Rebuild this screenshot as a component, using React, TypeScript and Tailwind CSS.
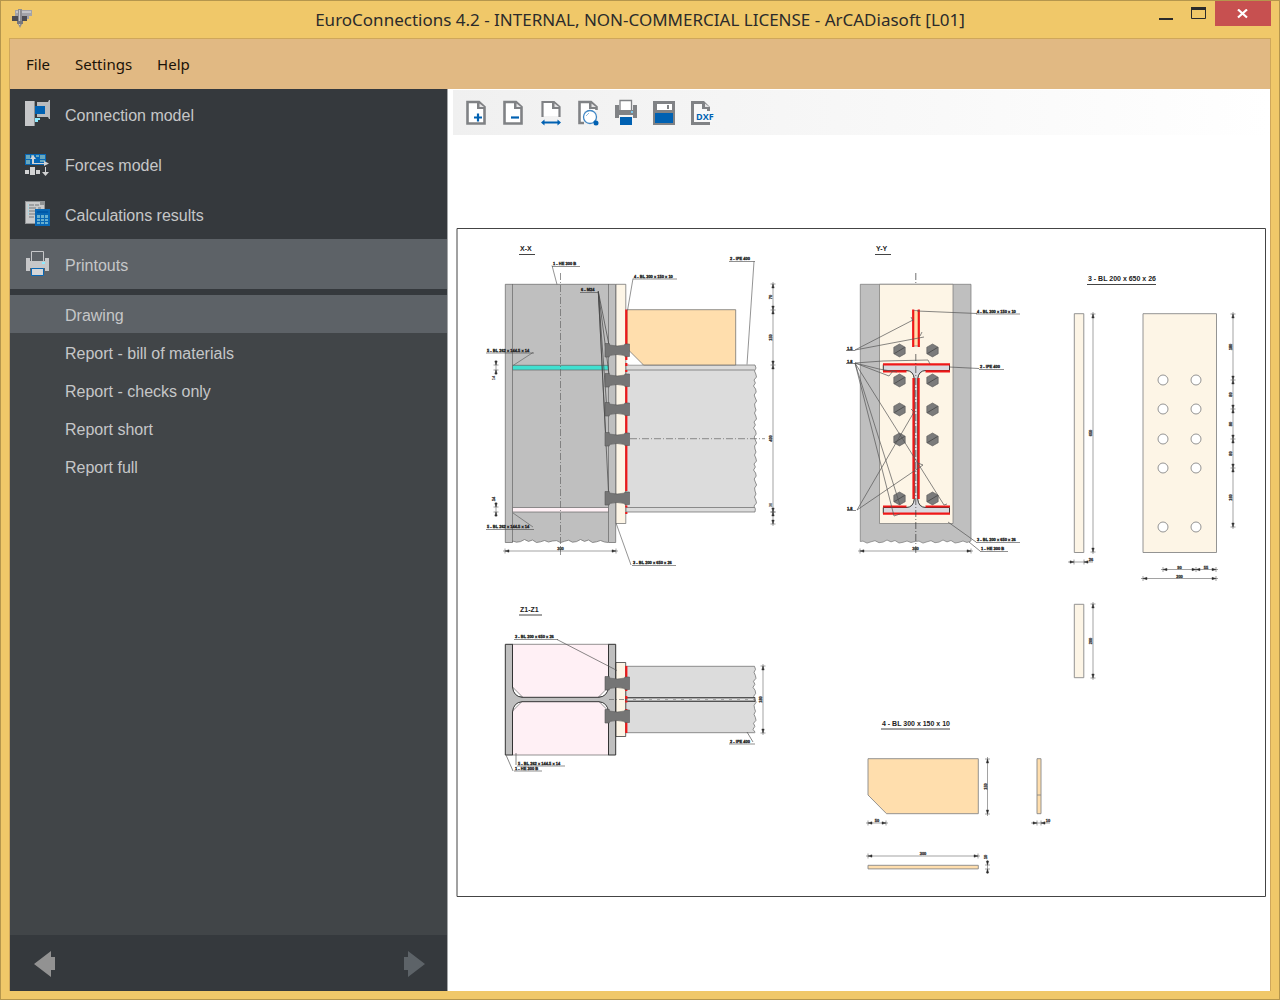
import React from 'react'

const bolts = [350, 380, 409, 439, 498]

const reports = [
  'Drawing',
  'Report - bill of materials',
  'Report - checks only',
  'Report short',
  'Report full',
]

const wobble = [0, 1, -0.5, 0.8, 1.5, -1, 0.4, -1.5, 0.6, 1.2, -0.8, 0.3, 1.6, -0.4]

// Ragged break line of a cut member, running down or to the left
const breakDown = (x: number, y1: number, y2: number) => {
  let d = ''
  for (let y = y1 + 3, i = 1; y < y2; y += 3, i++) d += `L${x + wobble[i % 14]} ${y}`
  return `${d}L${x} ${y2}`
}

const breakLeft = (y: number, x1: number, x2: number) => {
  let d = ''
  for (let x = x1 - 4, i = 1; x > x2; x -= 4, i++) d += `L${x} ${y + wobble[i % 14]}`
  return `${d}L${x2} ${y}`
}

const AppIcon = () => (
  <svg width="20" height="20" viewBox="0 0 20 20" aria-hidden="true">
    <path d="M3 1h17v6h-3v3h-6V7H3z" fill="#a3a3a8" />
    <path d="M4 2h15v2H4z" fill="#c3c3c6" />
    <path d="M0 7h15v5H0z" fill="#4c4c52" />
    <path d="M6 0h4v15l-2 4-2-4z" fill="#8d8d92" />
    <path d="M7 1h1v15H7z" fill="#c8c8ca" />
    <path d="M5 12h6v3H5z" fill="#77777c" />
  </svg>
)

const ConnectionIcon = () => (
  <svg width="26" height="28" viewBox="0 0 26 28" aria-hidden="true">
    <path d="M0 1h9v25H0z" fill="#c6c7c9" />
    <path d="M9 1h1v25H9z" fill="#8b8f92" />
    <path d="M12 2h11l1-2h1v19h-1l-1-2H12v-3h8V6h-8z" fill="#b9bbbe" />
    <path d="M10 6h10v8H10z" fill="#0061b2" />
    <path d="M10 18h5v2h-2v2h-3z" fill="#8eeaff" />
  </svg>
)

const ForcesIcon = () => (
  <svg width="26" height="28" viewBox="0 0 26 28" aria-hidden="true">
    <path d="M0 4h21v11H0z" fill="#0867b5" />
    <path d="M1 5h4v4H1zM6 5h3v2H6zM11 5h3v2h-3zM15 5h5v4h-5zM1 10h4v4H1zM15 10h5v2h-5z" fill="#68a7bd" />
    <path d="M8 5l3 4H9v4h10v-2l5 2.500-5 2.500v-2H7V9H5z" fill="#d2d3d4" />
    <path d="M0 20h4v4H0zM5 17h5v8H5zM11 20h4v4h-4zM20 17h1v5h3l-3.500 4-3.500-4h3z" fill="#d2d3d4" />
  </svg>
)

const ResultsIcon = () => (
  <svg width="26" height="28" viewBox="0 0 26 28" aria-hidden="true">
    <path d="M0 1h20v23H0z" fill="#8f9294" />
    <path d="M1 2h14v3h4v18H1z" fill="#c9cacb" />
    <path d="M4 5h5M10 5h4M4 8h7M13 8h3M4 11h8M4 14h6M4 17h5" stroke="#74797c" />
    <path d="M3 5h1M3 8h1M3 11h1M3 14h1" stroke="#8eeaff" />
    <path d="M10 9h15v17H10z" fill="#0867b5" />
    <path d="M12 15h11v9H12z" fill="#68b0d0" />
    <path d="M15.500 15v9M19.500 15v9M12 18.500h11M12 21.500h11" stroke="#0867b5" />
    <path d="M12 11h11v2H12z" fill="#0059a8" />
  </svg>
)

const PrinterIcon = () => (
  <svg width="26" height="28" viewBox="0 0 26 28" aria-hidden="true">
    <path d="M6.500 11V1.500h12V11" fill="#5d6267" stroke="#c6c7c9" />
    <path d="M1 8h4v3h15V8h4v13h-4v-3H5v3H1z" fill="#c6c7c9" />
    <path d="M17 12h3v2h-3z" fill="#8eeaff" />
    <path d="M6.500 18.500h12v7h-12z" fill="#d5d6d8" stroke="#0867b5" />
  </svg>
)

const Sheet = ({ open }: { open?: boolean }) => (
  <>
    <path d="M5 3h12l5 5v16H5z" fill="#fff" />
    <path
      d={open ? 'M14 24H5.500V3H17l5.500 5v3' : 'M5.500 3H17l5.500 5v16.500h-17z'}
      fill="none"
      stroke="#808285"
      strokeWidth="2.600"
    />
    <path d="M15 3h2l6 5v2h-8z" fill="#808285" />
    <path d="M17.500 4.500V8H22z" fill="#e4e4e5" />
  </>
)

const tools = [
  {
    name: 'Zoom in',
    icon: (
      <>
        <Sheet />
        <path d="M16 14.500v8M12 18.500h8" stroke="#0061b2" strokeWidth="2.200" />
      </>
    ),
  },
  {
    name: 'Zoom out',
    icon: (
      <>
        <Sheet />
        <path d="M12 18.500h8" stroke="#0061b2" strokeWidth="2.200" />
      </>
    ),
  },
  {
    name: 'Fit width',
    icon: (
      <>
        <path d="M5 2h13l5 6v9H5z" fill="#fff" />
        <path d="M5.500 18V3H17l5.500 5v10" fill="none" stroke="#808285" strokeWidth="2.200" />
        <path d="M15 3h2l6 5v2h-8z" fill="#808285" />
        <path d="M17.500 4.500V8H22z" fill="#e4e4e5" />
        <path d="M6 23.500h16" stroke="#0061b2" strokeWidth="2" />
        <path d="M4 23.500l3.500-3v6zM24 23.500l-3.500-3v6z" fill="#0061b2" />
      </>
    ),
  },
  {
    name: 'Preview',
    icon: (
      <>
        <Sheet open />
        <path d="M10 12h14v14H10z" fill="#f1f1f1" />
        <circle cx="16" cy="18" r="6.500" fill="#fff" stroke="#3f86c4" strokeWidth="1.300" />
        <path d="M12 17l3-3" stroke="#8dbbe0" />
        <path d="M20 22l2 2" stroke="#3f86c4" strokeWidth="2" />
        <circle cx="22" cy="24" r="2.500" fill="#0061b2" />
      </>
    ),
  },
  {
    name: 'Print',
    icon: (
      <>
        <path d="M8 11V1.500h11.500V11" fill="#fff" stroke="#808285" strokeWidth="1.300" />
        <path d="M3 6h4v5h14V6h4v13h-4v-3H7v3H3z" fill="#808285" />
        <path d="M19 12h2v2h-2z" fill="#7cc9ec" />
        <path d="M8 18h12v8H8z" fill="#0061b2" />
      </>
    ),
  },
  {
    name: 'Save',
    icon: (
      <>
        <path d="M3 2h22v24H3z" fill="#808285" />
        <path d="M7 5h15v6H7z" fill="#fff" />
        <path d="M17 6h2v4h-2z" fill="#808285" />
        <path d="M5 14h18v10H5z" fill="#0061b2" />
      </>
    ),
  },
  {
    name: 'Export DXF',
    icon: (
      <>
        <path d="M4 2h13l6 6v4h-3v-2h-5V5H7v18h16v3H4z" fill="#808285" />
        <path d="M18 4.500V8h4.500z" fill="#e4e4e5" />
        <path d="M7 5h8v5h5v2h5v11H7z" fill="#f8f8f8" />
        <text x="9" y="21" fontSize="9" fontWeight="700" fill="#0061b2">DXF</text>
      </>
    ),
  },
]

type LabelProps = { x: number; y: number; text: string; width?: number; big?: boolean }

// Underlined caption of a part or a view
const Label = ({ x, y, text, width = 0, big }: LabelProps) => (
  <g>
    <text x={x} y={y} fontSize={big ? 7 : 4} fontWeight="700" fill="#222" stroke="#222" strokeWidth={big ? 0 : 0.3}>
      {text}
    </text>
    {width > 0 && (
      <path d={`M${x - 1} ${y + (big ? 3.5 : 1.5)}h${width}`} stroke="#444" strokeWidth={big ? 1 : 0.6} />
    )}
  </g>
)

type DimProps = { at: number; stops: number[]; texts: string[]; outside?: boolean }

const DimX = ({ at, stops, texts, outside }: DimProps) => {
  const last = stops[stops.length - 1]
  return (
    <g fill="#222" stroke="#444" strokeWidth="0.500">
      <path d={`M${stops[0] - (outside ? 6 : 2)} ${at}H${last + (outside ? 9 : 2)}`} />
      {stops.map((s, i) => (
        <g key={s}>
          <path d={`M${s} ${at - 2.5}v5`} />
          {(i > 0) !== !!outside && <path d={`M${s} ${at}l-4 -1.200v2.400z`} />}
          {(i < stops.length - 1) !== !!outside && <path d={`M${s} ${at}l4 -1.200v2.400z`} />}
        </g>
      ))}
      {texts.map((t, i) => (
        <text
          key={i}
          x={outside ? last + 7 : (stops[i] + stops[i + 1]) / 2}
          y={at - 1}
          fontSize="4"
          fontWeight="700"
          textAnchor="middle"
          strokeWidth="0.300"
        >
          {t}
        </text>
      ))}
    </g>
  )
}

const DimY = ({ at, stops, texts, outside }: DimProps) => {
  const last = stops[stops.length - 1]
  return (
    <g fill="#222" stroke="#444" strokeWidth="0.500">
      <path d={`M${at} ${stops[0] - (outside ? 5 : 2)}V${last + (outside ? 5 : 2)}`} />
      {stops.map((s, i) => (
        <g key={s}>
          <path d={`M${at - 2.5} ${s}h5`} />
          {(i > 0) !== !!outside && <path d={`M${at} ${s}l-1.200 -4h2.400z`} />}
          {(i < stops.length - 1) !== !!outside && <path d={`M${at} ${s}l-1.200 4h2.400z`} />}
        </g>
      ))}
      {texts.map((t, i) => {
        const y = outside ? stops[0] - 8 : (stops[i] + stops[i + 1]) / 2
        return (
          <text
            key={i}
            x={at - 1}
            y={y}
            fontSize="4"
            fontWeight="700"
            textAnchor="middle"
            strokeWidth="0.300"
            transform={`rotate(-90 ${at - 1} ${y})`}
          >
            {t}
          </text>
        )
      })}
    </g>
  )
}

const Bolt = ({ y }: { y: number }) => (
  <path
    d={`M605 ${y - 6.5}h4.300v1.500q8 2 15.500 0v-1h4.700v12.500h-4.700v-1q-8 -2 -15.500 0v1.500h-4.300z`}
    fill="#757575"
    stroke="#555"
    strokeWidth="0.600"
  />
)

const Hex = ({ x, y }: { x: number; y: number }) => (
  <g stroke="#555" strokeWidth="0.600">
    <path d={`M${x} ${y - 6.5}l5.700 3.200v6.500l-5.700 3.200l-5.700 -3.200v-6.500z`} fill="#7b7b7b" />
    <path d={`M${x - 5} ${y + 3}l10 -6`} stroke="#333" />
  </g>
)

const SectionX = () => (
  <g stroke="#666" strokeWidth="0.700">
    <path d={`M505.300 284.300H615.700V542.500H608.500${breakLeft(541, 608.5, 512.5)}V542.500H505.300z`} fill="#bfbfbf" />
    <path d="M512.500 284v258M608.500 284v258" />
    <path d="M512.500 365.300h96v4.700h-96z" fill="#40e0d0" />
    <path d="M512.500 507.500h96v4.500h-96z" fill="#fff0f5" />
    <path d="M560.500 273v282" strokeDasharray="7 2 1 2" />
    <path d="M616 284.300h9.800v239.200H616z" fill="#fdf5e6" />
    <path d={`M626 365H755${breakDown(755, 365, 512)}H626z`} fill="#dcdcdc" />
    <path d="M626 370h128.500M626 507.500h128.500" />
    <path d="M627 309.700h108.700V365H643.500L627 348.500z" fill="#ffdead" />
    <path d="M629 352v12.500h13z" fill="#fff" stroke="none" />
    <path d="M630 438.700h135" strokeDasharray="7 2 1 2" />
    <path d="M626.300 309.500V360M626.300 363v3M626.300 370v2M626.300 375v116M626.300 505.500v2M626.300 512v2" stroke="#f01818" strokeWidth="2.200" />
    <path
      d="M598.300 291.500L609 345M598.300 291.500L609 374M598.300 291.500L606.500 404M598.300 291.500L605.500 433M598.300 291.500L608.500 492"
      fill="none"
      stroke="#444"
    />
    {bolts.map((y) => (
      <Bolt key={y} y={y} />
    ))}
    <path
      d="M552 265.500l5 19M633 278.500l-5.500 32M754 261.500l-7 103M533 352.500l-20 13M533 527l-20-14M616 523l15 42"
      stroke="#666"
    />
  </g>
)

const SectionY = () => (
  <g stroke="#777" strokeWidth="0.700" fill="none">
    <path d={`M860.300 284.300H971V541${breakLeft(541.5, 971, 860.3)}z`} fill="#bfbfbf" />
    <path d="M879.500 284.300H953v239.200h-73.500z" fill="#fdf5e6" />
    <path d="M913.500 310.500h5V346h-5z" fill="#ffdead" />
    {bolts.map((y) => (
      <g key={y}>
        <Hex x={899.500} y={y + 0.500} />
        <Hex x={932.500} y={y + 0.500} />
      </g>
    ))}
    <path
      d="M883.300 364.500h66.200v6H926q-7.500 0-8.300 8.500V499q.8 8.500 8.300 8.500h23.500v6h-66.200v-6H906q7.500 0 8.300-8.500V379q-.8-8.500-8.300-8.500h-22.700z"
      fill="#d9d9de"
      stroke="#222"
      strokeWidth="0.900"
    />
    <path
      d="M913.200 309.500V347M918.800 309.500V347M883 364.300h67M883 371.300h23.500M925.500 371.300H950M913.500 378v121M918.600 378v121M883 506.500h23.500M925.500 506.500H950M883 513.600h67"
      stroke="#f01818"
      strokeWidth="2.200"
    />
    <path d="M915.800 273v10M915.800 354v199" strokeDasharray="7 2 1 2" stroke="#333" />
    <path
      d="M855 350l58-30M911 317l2 4M855 350l69-13M920 336l2-4M855 363l28-2 45-1 2 4M855 363l24 6 18 3M855 363l34 13 4-5M855 363l39 153 6-2M855 363l45 142M855 363l89 142 3-1M857 510l57-98-3-3M857 510l66-45-5-2"
      stroke="#555"
    />
    <path d="M917 311l60 2.500M949 367l30 1.500M948 522l28 20M969 542l11 9M846 350.500h9M846 363.500h9M847 510.500h9" stroke="#555" />
  </g>
)

const SectionZ = () => (
  <g stroke="#666" strokeWidth="0.700">
    <path d="M512 644.300h97V755h-97z" fill="#fff0f5" />
    <path d="M512.500 687v10h10zM608.500 687v10h-10zM512.500 711v-10h10zM608.500 711v-10h-10z" fill="#fff" />
    <path
      d="M505.300 644.300h7.200V687q1 9.500 9.500 10.300h77q8.500-.8 9.500-10.300v-42.700h7.200V755h-7.200v-43q-1-9.500-9.500-10.300h-77q-8.500.8-9.500 10.300v43h-7.200z"
      fill="#bfbfbf"
      stroke="#333"
      strokeWidth="1"
    />
    <path d="M616 662.500h9.700v74H616z" fill="#fdf5e6" stroke="#222" />
    <path d={`M626 666.300H754.500${breakDown(754.5, 666.3, 732.7)}H626z`} fill="#dcdcdc" />
    <path d="M626 697.500h129v4H626z" fill="#aaa" stroke="#222" />
    <path d="M628 699.500h127" stroke="#fff" strokeDasharray="5 3" />
    <path d="M609 699.500h18" strokeDasharray="5 2 1 2" />
    <path d="M626.300 666v12M626.300 689v2M626.300 696v3M626.300 700.500v2M626.300 709v2M626.300 722v11" stroke="#f01818" strokeWidth="2.200" />
    <Bolt y={683} />
    <Bolt y={716} />
    <path d="M557 639.500l60 31M747 732l6 10M506 755l7 16M516 753v12" stroke="#555" />
  </g>
)

const Parts = () => (
  <g stroke="#888" strokeWidth="0.900">
    <path d="M1074.300 313.700h9.500v238.800h-9.500zM1143 313.700h73.500v238.800H1143zM1074.300 604.300h9.500v73.400h-9.500z" fill="#fdf5e6" />
    {[380, 409, 439, 468, 527].map((y) => (
      <g key={y} fill="#fff">
        <circle cx="1163" cy={y} r="5" />
        <circle cx="1196" cy={y} r="5" />
      </g>
    ))}
    <path d="M868 758.700h110.300v55H886.500L868 795zM1037 758.700h4v55h-4zM868 865.300h110.300v3.600H868z" fill="#ffdead" />
    <path d="M1037 795h4" />
  </g>
)

const Drawing = () => (
  <svg
    viewBox="456 229 810 669"
    className="block h-auto w-full overflow-visible"
    fontFamily="'Liberation Sans', Arial, sans-serif"
    role="img"
    aria-label="Connection drawing"
  >
    <path d="M457 228.500h808.500v668H457z" fill="#fff" stroke="#444" />
    <SectionX />
    <SectionY />
    <SectionZ />
    <Parts />

    <Label big x={520} y={251} text="X-X" width={16} />
    <Label big x={876} y={251} text="Y-Y" width={16} />
    <Label big x={520} y={611.500} text="Z1-Z1" width={23} />
    <Label big x={1088} y={281} text="3 - BL 200 x 650 x 26" width={69} />
    <Label big x={882} y={725.500} text="4 - BL 300 x 150 x 10" width={69} />

    <Label x={553} y={265} text="1 - HE 300 B" width={28} />
    <Label x={634} y={277.500} text="4 - BL 300 x 150 x 10" width={44} />
    <Label x={730} y={260} text="2 - IPE 400" width={26} />
    <Label x={581} y={291} text="6 - M24" width={18} />
    <Label x={487} y={351.500} text="5 - BL 262 x 144.5 x 14" width={48} />
    <Label x={487} y={528} text="5 - BL 262 x 144.5 x 14" width={48} />
    <Label x={633} y={564} text="3 - BL 200 x 650 x 26" width={44} />
    <Label x={977} y={312.500} text="4 - BL 300 x 150 x 10" width={44} />
    <Label x={980} y={368} text="2 - IPE 400" width={25} />
    <Label x={977} y={541} text="3 - BL 200 x 650 x 26" width={44} />
    <Label x={981} y={550} text="1 - HE 300 B" width={28} />
    <Label x={847} y={349.500} text="1.5" />
    <Label x={847} y={362.500} text="1.8" />
    <Label x={847} y={509.500} text="1.8" />
    <Label x={515} y={638} text="3 - BL 200 x 650 x 26" width={44} />
    <Label x={518} y={764.500} text="5 - BL 262 x 144.5 x 14" width={48} />
    <Label x={515} y={769.500} text="1 - HE 300 B" width={28} />
    <Label x={730} y={742.500} text="2 - IPE 400" width={26} />

    <DimX at={551} stops={[505, 616]} texts={['300']} />
    <DimX at={551} stops={[860, 971]} texts={['300']} />
    <DimY at={773} stops={[284, 310, 365, 512]} texts={['70', '150', '400']} />
    <DimY at={773} stops={[512, 524]} texts={[]} />
    <DimY at={496} stops={[365, 370]} texts={[]} outside />
    <DimY at={496} stops={[507, 512]} texts={['14']} outside />
    <g fontSize="4" fontWeight="700" textAnchor="middle" fill="#222">
      <text x="495" y="378" transform="rotate(-90 495 378)">14</text>
      <text x="772" y="505" transform="rotate(-90 772 505)">30</text>
    </g>
    <DimY at={763} stops={[666, 733]} texts={['180']} />
    <DimY at={1093} stops={[314, 552]} texts={['650']} />
    <DimX at={562} stops={[1074, 1084]} texts={['26']} outside />
    <DimY at={1233} stops={[314, 380, 409, 439, 468, 527]} texts={['180', '80', '80', '80', '160']} />
    <DimX at={569.500} stops={[1163, 1196, 1216]} texts={['90', '55']} />
    <DimX at={578.500} stops={[1143, 1216]} texts={['200']} />
    <DimY at={1093} stops={[604, 678]} texts={['200']} />
    <DimY at={987.500} stops={[759, 814]} texts={['150']} />
    <DimX at={823} stops={[868, 886]} texts={['50']} />
    <DimX at={823} stops={[1037, 1041]} texts={['10']} outside />
    <DimX at={856} stops={[868, 978]} texts={['300']} />
    <DimY at={987.500} stops={[865, 869]} texts={['10']} outside />
  </svg>
)

const modules = [
  { name: 'Connection model', icon: <ConnectionIcon /> },
  { name: 'Forces model', icon: <ForcesIcon /> },
  { name: 'Calculations results', icon: <ResultsIcon /> },
]

const Sidebar = () => (
  <nav className="flex w-[438px] shrink-0 flex-col border-r border-[#a5a7a9] bg-[#414548] font-['Liberation_Sans',Arial,sans-serif] text-base text-[#c6c7c8]">
    <div className="bg-[#35393d]">
      {modules.map((m) => (
        <button key={m.name} className="flex h-[50px] w-full items-center gap-[14px] pl-[15px] text-left">
          {m.icon}
          <span className="pt-1">{m.name}</span>
        </button>
      ))}
      <button className="flex h-[50px] w-full items-center gap-[14px] bg-[#5d6267] pl-[15px] text-left">
        <PrinterIcon />
        <span className="pt-1">Printouts</span>
      </button>
      <div className="h-[6px]" />
    </div>
    {reports.map((r, i) => (
      <button
        key={r}
        className={i === 0 ? 'h-[38px] bg-[#5d6267] pt-[3px] pl-[55px] text-left' : 'h-[38px] pt-[3px] pl-[55px] text-left'}
      >
        {r}
      </button>
    ))}
    <div className="mt-auto flex h-[56px] items-center justify-between bg-[#35393d] pt-0.5 pr-[22px] pl-6">
      <button aria-label="Previous">
        <svg width="22" height="26" viewBox="0 0 22 26">
          <path d="M0 13L17 0v6h4v13h-4v7z" fill="#929292" />
        </svg>
      </button>
      <button aria-label="Next">
        <svg width="22" height="26" viewBox="0 0 22 26">
          <path d="M22 13L5 0v6H1v13h4v7z" fill="#5d6368" />
        </svg>
      </button>
    </div>
  </nav>
)

const App = () => {
  return (
    <div className="flex min-h-screen flex-col border border-[#b5964d] bg-[#f0c869] px-2 pb-2 font-['Noto_Sans','Open_Sans',sans-serif]">
      <header className="flex h-[37px] items-start">
        <div className="flex w-[140px] pt-2 pl-[3px]">
          <AppIcon />
        </div>
        <h1 className="flex-1 pt-[5px] text-center text-[17px] leading-[28px] whitespace-nowrap text-[#2b2b2b]">
          EuroConnections 4.2 - INTERNAL, NON-COMMERCIAL LICENSE - ArCADiasoft [L01]
        </h1>
        <div className="flex w-[140px] justify-end">
          <button aria-label="Minimize" className="flex h-6 w-8 items-center justify-center">
            <svg width="16" height="16" viewBox="0 0 16 16">
              <path d="M0 13h14v2H0z" fill="#2b2b2b" />
            </svg>
          </button>
          <button aria-label="Maximize" className="flex h-6 w-8 items-center justify-center">
            <svg width="16" height="16" viewBox="0 0 16 16">
              <path d="M.5 3.500h14v10H.5z" fill="none" stroke="#2b2b2b" />
              <path d="M0 2h15v3H0z" fill="#2b2b2b" />
            </svg>
          </button>
          <button aria-label="Close" className="flex h-[25px] w-[56px] items-center justify-center bg-[#c75050]">
            <svg width="12" height="10" viewBox="0 0 12 10">
              <path d="M1 .5l9 8M10 .5l-9 8" stroke="#fff" strokeWidth="2.200" />
            </svg>
          </button>
        </div>
      </header>

      <div className="flex flex-1 flex-col border border-b-0 border-[#cfa75b]">
        <div className="flex h-[50px] items-center gap-[25px] bg-[#e1b983] px-4 text-[15px] text-[#1a1208]">
          <button>File</button>
          <button>Settings</button>
          <button>Help</button>
        </div>

        <div className="flex flex-1">
          <Sidebar />
          <main className="flex min-w-0 flex-1 flex-col bg-white">
            <div className="mt-px ml-[5px] bg-linear-to-r from-[#f0f0f0] to-white">
              <div className="grid h-[45px] w-[267px] grid-cols-7 pl-1">
                {tools.map((t) => (
                  <button key={t.name} aria-label={t.name} className="flex items-center justify-center">
                    <svg
                      width="28"
                      height="28"
                      viewBox="0 0 28 28"
                      className="shrink-0 overflow-visible"
                      fontFamily="'Open Sans', sans-serif"
                    >
                      {t.icon}
                    </svg>
                  </button>
                ))}
              </div>
            </div>
            <div className="flex flex-1 items-center pr-1 pl-2">
              <Drawing />
            </div>
          </main>
        </div>
      </div>
    </div>
  )
}

export default App
